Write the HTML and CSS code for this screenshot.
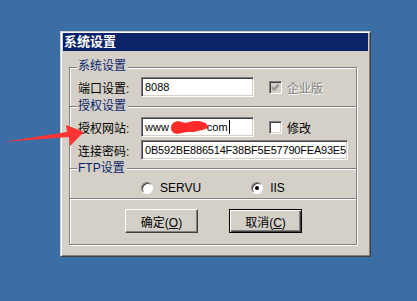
FILE: index.html
```html
<!DOCTYPE html>
<html lang="zh-CN">
<head>
<meta charset="UTF-8">
<title>系统设置</title>
<link rel="stylesheet" href="styles.css">
</head>
<body>
    <div class="dialog">
        <div class="title-bar">系统设置</div>
        <div class="panel">
            <div class="section sec-system">
                <span class="legend">系统设置</span>
                <div class="row">
                    <label class="label">端口设置:</label>
                    <div class="field field-short">8088</div>
                    <span class="check disabled"><svg width="9" height="9" viewBox="0 0 9 9"><path d="M1 3.5 L3 5.5 L7.5 1 M1 4.5 L3 6.5 L7.5 2 M1 5.5 L3 7.5 L7.5 3" stroke="#808080" stroke-width="1" fill="none"/></svg></span>
                    <span class="check-text disabled-text">企业版</span>
                </div>
            </div>
            <div class="section sec-auth">
                <span class="legend">授权设置</span>
                <div class="row">
                    <label class="label">授权网站:</label>
                    <div class="field field-short">www<svg class="blot" width="40" height="18" viewBox="0 0 40 18"><path d="M2 10 C2 4 8 2 13 4 C17 6 21 3 27 3 C33 3 38 5 39 8 C39 11 34 12 29 13 C23 15 18 13 13 15 C7 17 2 15 2 10 Z" fill="#ff2b2b"/></svg>com<span class="caret"></span></div>
                    <span class="check"></span>
                    <span class="check-text">修改</span>
                </div>
                <div class="row">
                    <label class="label">连接密码:</label>
                    <div class="field field-long">0B592BE886514F38BF5E57790FEA93E5</div>
                </div>
            </div>
            <div class="section sec-ftp">
                <span class="legend">FTP设置</span>
                <div class="row">
                    <span class="radio"></span>
                    <span class="radio-text">SERVU</span>
                    <span class="radio checked"></span>
                    <span class="radio-text">IIS</span>
                </div>
            </div>
            <div class="section sec-buttons">
                <button class="btn">确定(<u>O</u>)</button>
                <button class="btn default">取消(<u>C</u>)</button>
            </div>
        </div>
    </div>

    <svg class="arrow" width="100" height="30" viewBox="0 0 100 30">
        <path d="M3 22 L67 12 L66 5 L84 12 L70 26 L69 17 Z" fill="#ff3434"/>
    </svg>
</body>
</html>
```

FILE: styles.css
```css
* {
    margin: 0;
    padding: 0;
    box-sizing: border-box;
}
html, body {
    width: 417px;
    height: 301px;
    overflow: hidden;
}
body {
    position: relative;
    padding: 31px 0 0 60px;
    background-color: #3a6ea5;
    font-family: "Liberation Sans", "Noto Sans CJK SC", sans-serif;
    font-size: 12px;
    color: #000;
}

.dialog {
    display: flex;
    flex-direction: column;
    width: 311px;
    height: 226px;
    padding: 1px 2px 2px 2px;
    background-color: #d4d0c8;
    border: 1px solid;
    border-color: #d4d0c8 #404040 #404040 #d4d0c8;
    box-shadow: inset 1px 1px #fff, inset -1px -1px #808080;
}
.title-bar {
    height: 18px;
    padding-left: 1px;
    line-height: 18px;
    color: #fff;
    font-weight: bold;
    font-size: 13px;
    background-color: #0a246a;
}

.panel {
    display: flex;
    flex-direction: column;
    width: 288px;
    height: 178px;
    margin: 16px 0 0 6px;
    border: 1px solid #808080;
    box-shadow: inset 1px 1px #fff, 1px 1px #fff;
}

.section {
    position: relative;
    padding-left: 8px;
}
.sec-system {
    height: 38px;
    padding-top: 9px;
}
.sec-auth,
.sec-ftp,
.sec-buttons {
    border-top: 1px solid #808080;
    box-shadow: inset 0 1px #fff;
}
.sec-auth {
    height: 62px;
    padding-top: 10px;
}
.sec-ftp {
    height: 30px;
    padding-top: 9px;
}
.sec-buttons {
    display: flex;
    justify-content: center;
    gap: 31px;
    height: 46px;
    padding: 10px 0 0 1px;
}

.legend {
    position: absolute;
    top: -9px;
    left: 7px;
    padding: 0 2px 0 1px;
    line-height: 16px;
    color: #0a246a;
    background-color: #d4d0c8;
}
.sec-system .legend {
    top: -10px;
}

.row {
    display: flex;
    align-items: center;
    height: 20px;
    margin-bottom: 3px;
}
.label {
    width: 63px;
}
.field {
    display: flex;
    align-items: center;
    height: 20px;
    padding-left: 3px;
    font-size: 11px;
    background-color: #fff;
    border: 1px solid;
    border-color: #808080 #fff #fff #808080;
    box-shadow: inset 1px 1px #404040, inset -1px -1px #d4d0c8;
}
.field-short {
    width: 113px;
}
.field-long {
    width: 207px;
    letter-spacing: -0.2px;
}
.blot {
    margin: 0 -2px 0 0;
}
.caret {
    width: 1px;
    height: 14px;
    margin-left: 1px;
    background-color: #000;
}

.check {
    display: flex;
    align-items: center;
    justify-content: center;
    width: 13px;
    height: 13px;
    margin-left: 15px;
    background-color: #fff;
    border: 1px solid;
    border-color: #808080 #fff #fff #808080;
    box-shadow: inset 1px 1px #404040, inset -1px -1px #d4d0c8;
}
.check.disabled {
    background-color: #d4d0c8;
}
.check-text {
    margin-left: 5px;
}
.disabled-text {
    color: #808080;
    text-shadow: 1px 1px #fff;
}

.radio {
    display: flex;
    align-items: center;
    justify-content: center;
    width: 12px;
    height: 12px;
    margin-left: 63px;
    background-color: #fff;
    border: 1px solid;
    border-color: #808080 #fff #fff #808080;
    border-radius: 50%;
    box-shadow: inset 1px 1px #404040;
}
.radio + .radio-text + .radio {
    margin-left: 50px;
}
.radio.checked::after {
    content: "";
    width: 4px;
    height: 4px;
    border-radius: 50%;
    background-color: #000;
}
.radio-text {
    margin-left: 7px;
}

.btn {
    width: 73px;
    height: 24px;
    font-family: "Liberation Sans", "Noto Sans CJK SC", sans-serif;
    font-size: 12px;
    color: #000;
    background-color: #d4d0c8;
    border: 1px solid;
    border-color: #fff #404040 #404040 #fff;
    box-shadow: inset -1px -1px #808080;
}
.btn.default {
    border: 1px solid #000;
    box-shadow: inset 1px 1px #fff, inset -1px -1px #404040, inset -2px -2px #808080;
}

.arrow {
    position: absolute;
    left: 0;
    top: 120px;
}
```
